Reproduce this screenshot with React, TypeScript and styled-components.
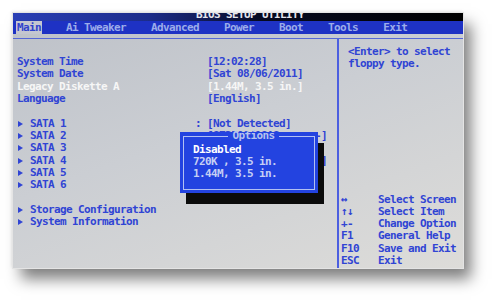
import styled, { createGlobalStyle } from 'styled-components';

const GlobalStyle = createGlobalStyle`
  html, body {
    margin: 0;
    padding: 0;
    background: #fff;
  }
  body {
    font-family: 'DejaVu Sans Mono', 'Liberation Mono', monospace;
    font-size: 11px;
    letter-spacing: -0.62px;
    font-weight: bold;
  }
`;

const tabs = ['Main', 'Ai Tweaker', 'Advanced', 'Power', 'Boot', 'Tools', 'Exit'];

const settings = [
  { label: 'System Time', value: '[12:02:28]' },
  { label: 'System Date', value: '[Sat 08/06/2011]' },
  { label: 'Legacy Diskette A', value: '[1.44M, 3.5 in.]', active: true },
  { label: 'Language', value: '[English]' },
];

const drives = [
  { label: 'SATA 1', value: '[Not Detected]' },
  { label: 'SATA 2', value: '[ST3500418AS      -]' },
  { label: 'SATA 3', value: '[Not Detected]' },
  { label: 'SATA 4', value: '[HL-DT-ST DVDRAM GZ]' },
  { label: 'SATA 5', value: '[Not Detected]' },
  { label: 'SATA 6', value: '[Not Detected]' },
];

const submenus = ['Storage Configuration', 'System Information'];

const keys = [
  ['↔', 'Select Screen'],
  ['↑↓', 'Select Item'],
  ['+-', 'Change Option'],
  ['F1', 'General Help'],
  ['F10', 'Save and Exit'],
  ['ESC', 'Exit'],
];

const options = ['Disabled', '720K , 3.5 in.', '1.44M, 3.5 in.'];

const App = () => {
  return (
    <Page>
      <GlobalStyle />
      <Screen>
        <TitleBar>
          <Title>BIOS SETUP UTILITY</Title>
        </TitleBar>
        <MenuBar>
          {tabs.map((el, idx) => (
            <Tab key={el} $active={idx === 0}>
              {el}
            </Tab>
          ))}
        </MenuBar>
        <Body>
          <LeftPane>
            <Group>
              {settings.map((el) => (
                <Row key={el.label} $active={el.active}>
                  <span>{el.label}</span>
                  <span />
                  <span>{el.value}</span>
                </Row>
              ))}
            </Group>
            <Group>
              {drives.map((el) => (
                <Row key={el.label}>
                  <span>
                    <Marker />
                    {el.label}
                  </span>
                  <span>:</span>
                  <span>{el.value}</span>
                </Row>
              ))}
            </Group>
            <Group>
              {submenus.map((el) => (
                <Row key={el}>
                  <span>
                    <Marker />
                    {el}
                  </span>
                </Row>
              ))}
            </Group>
          </LeftPane>
          <RightPane>
            <Help>
              {'<Enter> to select'}
              <br />
              floppy type.
            </Help>
            <Keys>
              {keys.map(([k, desc]) => (
                <KeyRow key={k}>
                  <span>{k}</span>
                  <span>{desc}</span>
                </KeyRow>
              ))}
            </Keys>
          </RightPane>
        </Body>
        <Popup>
          <Frame>
            <legend>Options</legend>
            {options.map((el, idx) => (
              <Option key={el} $selected={idx === 0}>
                {el}
              </Option>
            ))}
          </Frame>
        </Popup>
      </Screen>
    </Page>
  );
};

const Page = styled.div`
  width: 498px;
  height: 302px;
  padding: 13px;
  box-sizing: border-box;
  background: #fff;
`;

const Screen = styled.div`
  position: relative;
  width: 450px;
  height: 255px;
  display: flex;
  flex-direction: column;
  overflow: hidden;
  background: linear-gradient(160deg, #bdc1c8 0%, #cbced3 45%, #dddcd9 100%);
  box-shadow: 8px 11px 14px rgba(0, 0, 0, 0.5), -1px -1px 3px rgba(0, 0, 0, 0.12);
  outline: 1px solid #e4e4e4;
`;

const TitleBar = styled.div`
  height: 8px;
  flex: none;
  display: flex;
  justify-content: center;
  align-items: flex-start;
  overflow: hidden;
  padding-left: 24px;
  background: linear-gradient(90deg, #2a3fb5 0%, #1c2c8a 30%, #060a20 55%, #000 100%);
`;

const Title = styled.span`
  line-height: 10px;
  margin-top: -3.5px;
  color: #e6e6ee;
`;

const MenuBar = styled.div`
  height: 13px;
  flex: none;
  display: flex;
  align-items: center;
  gap: 23px;
  padding-left: 3px;
  background: #1e32c4;
  line-height: 13px;
`;

const Tab = styled.span<{ $active?: boolean }>`
  padding: 0 1px;
  color: ${({ $active }) => ($active ? '#3042cc' : '#9cacea')};
  background: ${({ $active }) => ($active ? '#c4c6d0' : 'transparent')};
`;

const Body = styled.div`
  flex: 1;
  display: flex;
  margin-top: 4px;
  border-top: 1px solid #5567d6;
  color: #3044d4;
`;

const LeftPane = styled.div`
  width: 326px;
  padding: 17px 0 0 4px;
  box-sizing: border-box;
  border-right: 2px solid #4c5fe0;
`;

const Group = styled.div`
  margin-bottom: 12.5px;
`;

const Row = styled.div<{ $active?: boolean }>`
  display: grid;
  grid-template-columns: 178px 12px auto;
  line-height: 12.3px;
  white-space: pre;
  color: ${({ $active }) => ($active ? '#f6f6f6' : 'inherit')};
`;

const Marker = styled.span`
  display: inline-block;
  width: 0;
  height: 0;
  border-left: 5px solid currentColor;
  border-top: 3px solid transparent;
  border-bottom: 3px solid transparent;
  margin: 0 7px 0 1px;
  vertical-align: 0;
`;

const RightPane = styled.div`
  flex: 1;
  display: flex;
  flex-direction: column;
  justify-content: space-between;
  padding: 7px 0 1px 2px;
`;

const Help = styled.div`
  padding-left: 7px;
  line-height: 12.3px;
`;

const Keys = styled.div`
  display: flex;
  flex-direction: column;
`;

const KeyRow = styled.div`
  display: grid;
  grid-template-columns: 37px auto;
  line-height: 12.2px;
  white-space: pre;
`;

const Popup = styled.div`
  position: absolute;
  left: 167px;
  top: 119px;
  width: 138px;
  height: 61px;
  box-sizing: border-box;
  padding: 0 3px 3px;
  background: #2343e0;
  box-shadow: 6px 11px 0 #0b0b0b;
`;

const Frame = styled.fieldset`
  margin: 0;
  height: 100%;
  box-sizing: border-box;
  min-width: 0;
  padding: 4px 0 0 9px;
  border: 1px solid #b2c0f2;
  legend {
    margin: 0 auto;
    padding: 0 4px;
    line-height: 8px;
    color: #b6c2ee;
  }
`;

const Option = styled.div<{ $selected?: boolean }>`
  line-height: 12px;
  white-space: pre;
  color: ${({ $selected }) => ($selected ? '#ffffff' : '#c6cff4')};
`;

export default App;
